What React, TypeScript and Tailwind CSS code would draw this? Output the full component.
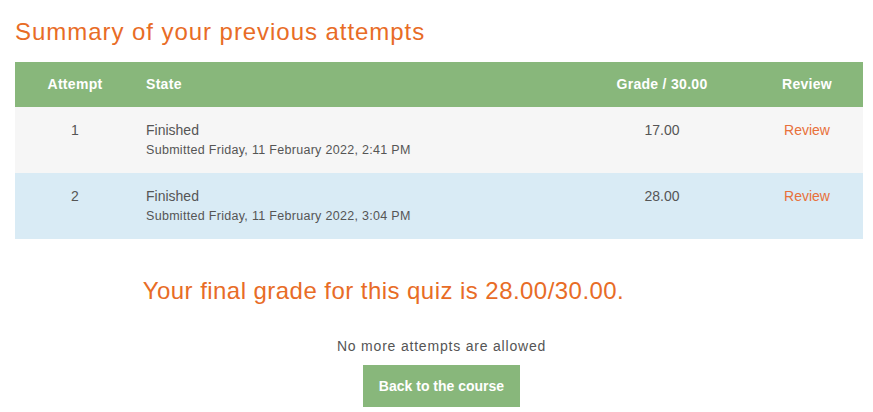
const attempts = [
  { n: 1, submitted: 'Submitted Friday, 11 February 2022, 2:41 PM', grade: '17.00', bg: 'bg-[#f6f6f6]' },
  { n: 2, submitted: 'Submitted Friday, 11 February 2022, 3:04 PM', grade: '28.00', bg: 'bg-[#d9ebf5]' },
];

const App = () => {
  return (
    <div className="w-[873px] h-[412px] bg-white overflow-hidden font-['Liberation_Sans',sans-serif] text-[#555]">
      {/* Heading */}
      <h2 className="pl-[15px] pt-[17px] h-[62px] text-[24px] leading-[30px] text-[#e86c26] tracking-[0.95px]">
        Summary of your previous attempts
      </h2>

      {/* Attempts table */}
      <div className="mx-[15px] w-[848px]">
        <div className="flex h-[45px] items-center bg-[#88b77b] text-white font-bold text-[14px] tracking-[0.3px]">
          <div className="w-[120px] text-center">Attempt</div>
          <div className="w-[438px] pl-[11px]">State</div>
          <div className="w-[178px] text-center">Grade / 30.00</div>
          <div className="w-[112px] text-center">Review</div>
        </div>
        {attempts.map((a) => (
          <div key={a.n} className={`flex h-[66px] items-start pt-[14px] text-[14px] ${a.bg}`}>
            <div className="w-[120px] text-center leading-[18px]">{a.n}</div>
            <div className="w-[438px] pl-[11px]">
              <div className="leading-[18px]">Finished</div>
              <div className="text-[12.5px] leading-[20px] mt-[1px] tracking-[0.3px]">{a.submitted}</div>
            </div>
            <div className="w-[178px] text-center leading-[18px]">{a.grade}</div>
            <div className="w-[112px] text-center leading-[18px] text-[#e8703a]">Review</div>
          </div>
        ))}
      </div>

      {/* Final grade */}
      <div className="pl-[15px] w-[752px] pt-[37px] text-center text-[24px] leading-[30px] text-[#e86c26] tracking-[0.45px]">
        Your final grade for this quiz is 28.00/30.00.
      </div>

      <div className="pt-[31px] flex flex-col items-center pl-[10px]">
        <div className="text-[14px] leading-[18px] tracking-[0.8px]">No more attempts are allowed</div>
        <button className="mt-[10px] w-[157px] h-[42px] bg-[#88b77b] text-white font-bold text-[14px] font-['Liberation_Sans',sans-serif]">
          Back to the course
        </button>
      </div>
    </div>
  );
};

export default App;
